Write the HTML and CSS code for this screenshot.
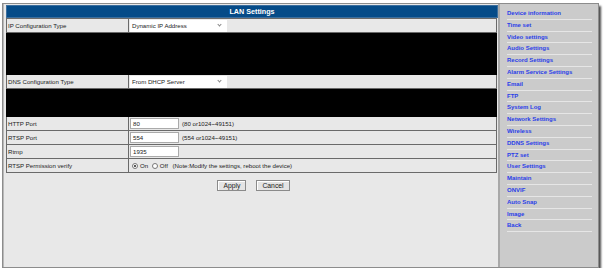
FILE: index.html
```html
<!DOCTYPE html>
<html lang="en">
<head>
    <meta charset="UTF-8">
    <title>LAN Settings</title>
    <link rel="stylesheet" href="styles.css">
</head>
<body>
    <div class="window">
        <div class="main">
            <div class="title-bar">LAN Settings</div>
            <table class="settings">
                <tr>
                    <td class="label">IP Configuration Type</td>
                    <td><div class="select">Dynamic IP Address<span class="chev"></span></div></td>
                </tr>
                <tr class="hidden-rows hidden-ip"><td colspan="2"></td></tr>
                <tr>
                    <td class="label">DNS Configuration Type</td>
                    <td><div class="select">From DHCP Server<span class="chev"></span></div></td>
                </tr>
                <tr class="hidden-rows hidden-dns"><td colspan="2"></td></tr>
                <tr>
                    <td class="label">HTTP Port</td>
                    <td><span class="field">80</span><span class="hint">(80 or1024~49151)</span></td>
                </tr>
                <tr>
                    <td class="label">RTSP Port</td>
                    <td><span class="field">554</span><span class="hint">(554 or1024~49151)</span></td>
                </tr>
                <tr>
                    <td class="label">Rtmp</td>
                    <td><span class="field">1935</span></td>
                </tr>
                <tr>
                    <td class="label">RTSP Permission verify</td>
                    <td>
                        <span class="radio checked"></span><span class="opt">On</span>
                        <span class="radio"></span><span class="opt">Off</span>
                        <span class="hint">(Note:Modify the settings, reboot the device)</span>
                    </td>
                </tr>
            </table>
            <div class="actions">
                <button class="btn">Apply</button>
                <button class="btn">Cancel</button>
            </div>
        </div>
        <ul class="menu">
            <li>Device information</li>
            <li>Time set</li>
            <li>Video settings</li>
            <li>Audio Settings</li>
            <li>Record Settings</li>
            <li>Alarm Service Settings</li>
            <li>Email</li>
            <li>FTP</li>
            <li>System Log</li>
            <li>Network Settings</li>
            <li>Wireless</li>
            <li>DDNS Settings</li>
            <li>PTZ set</li>
            <li>User Settings</li>
            <li>Maintain</li>
            <li>ONVIF</li>
            <li>Auto Snap</li>
            <li>Image</li>
            <li>Back</li>
        </ul>
    </div>
</body>
</html>
```

FILE: styles.css
```css
* {
    margin: 0;
    padding: 0;
    box-sizing: border-box;
}

body {
    font-family: "Liberation Sans", Arial, sans-serif;
    font-size: 6.1px;
    color: #222;
    background: #fff;
    padding: 3px 0 0 2px;
}

.window {
    display: flex;
    width: 597px;
    height: 265px;
    border: 1px solid #8c8c8c;
    background: #e8e8e8;
    box-shadow: 2px 3px 2px rgba(0, 0, 0, 0.7);
}

.main {
    width: 495px;
    padding: 1px 0 0 2px;
    border-left: 1px solid #b8b8b8;
}

.title-bar {
    height: 13px;
    line-height: 12px;
    background: #054b88;
    color: #fff;
    font-weight: bold;
    font-size: 7.2px;
    text-align: center;
    border: 1px solid #3a6e9e;
}

.settings {
    width: 491px;
    border-collapse: collapse;
    border: 1px solid #5a5a5a;
}

.settings td {
    height: 14px;
    border: 1px solid #6a6a6a;
    padding: 0 0 0 1px;
    vertical-align: middle;
}

.settings td.label {
    width: 122px;
}

.hidden-rows td {
    background: #000;
    border-color: #000;
}

.hidden-ip td {
    height: 42px;
}

.hidden-dns td {
    height: 28px;
}

.select {
    position: relative;
    width: 97px;
    height: 12px;
    line-height: 12px;
    background: #fff;
    padding-left: 2px;
}

.chev {
    position: absolute;
    right: 6px;
    top: 3px;
    width: 3px;
    height: 3px;
    border-right: 1px solid #888;
    border-bottom: 1px solid #888;
    transform: rotate(45deg);
}

.field {
    display: inline-block;
    width: 49px;
    height: 11px;
    line-height: 10px;
    background: #fff;
    border: 1px solid #aaa;
    padding-left: 2px;
    vertical-align: middle;
}

.hint {
    margin-left: 3px;
    vertical-align: middle;
}

.radio {
    display: inline-block;
    width: 6px;
    height: 6px;
    margin-left: 2px;
    border: 1px solid #777;
    border-radius: 50%;
    background: #fff;
    vertical-align: middle;
    position: relative;
}

.radio.checked::after {
    content: "";
    position: absolute;
    left: 1px;
    top: 1px;
    width: 2px;
    height: 2px;
    border-radius: 50%;
    background: #222;
}

.opt {
    margin-left: 2px;
    vertical-align: middle;
}

.actions {
    display: flex;
    justify-content: center;
    gap: 10px;
    padding: 7px 0 0 3px;
}

.btn {
    font-family: inherit;
    font-size: 6.8px;
    color: #222;
    height: 11px;
    padding: 0 5px;
    background: #e4e4e4;
    border: 1px solid #8a8a8a;
    box-shadow: inset 1px 1px 0 #fff;
}

.menu {
    list-style: none;
    width: 100px;
    background: #cbcbcb;
    border-left: 2px solid #a8a8a8;
    padding: 4px 6px 0 7px;
}

.menu li {
    line-height: 10.8px;
    border-bottom: 1px solid #e6e6e6;
    color: #2a3ee8;
    font-weight: bold;
    font-size: 6px;
}
```
